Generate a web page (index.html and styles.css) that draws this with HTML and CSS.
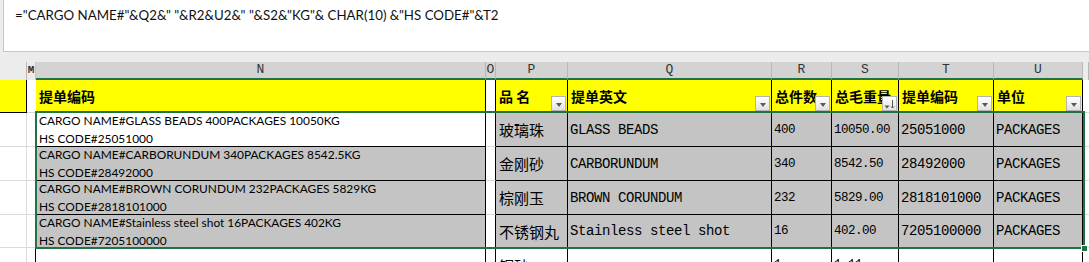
FILE: index.html
```html
<!DOCTYPE html>
<html lang="zh-CN">
<head>
    <meta charset="UTF-8">
    <title>提单编码</title>
    <link rel="stylesheet" href="styles.css">
</head>
<body>
    <div class="formula-bar">=&quot;CARGO NAME#&quot;&amp;Q2&amp;&quot; &quot;&amp;R2&amp;U2&amp;&quot; &quot;&amp;S2&amp;&quot;KG&quot;&amp; CHAR(10) &amp;&quot;HS CODE#&quot;&amp;T2</div>

    <div class="sheet">
        <!-- column letters -->
        <div class="row col-heads">
            <div class="ch off"></div>
            <div class="ch off narrow">M</div>
            <div class="ch">N</div>
            <div class="ch">O</div>
            <div class="ch">P</div>
            <div class="ch">Q</div>
            <div class="ch">R</div>
            <div class="ch">S</div>
            <div class="ch">T</div>
            <div class="ch">U</div>
            <div class="ch off"></div>
        </div>

        <!-- header row with autofilter -->
        <div class="row head-row">
            <div class="cell hd edge"></div>
            <div class="cell blank"></div>
            <div class="cell hd">提单编码</div>
            <div class="cell gap"></div>
            <div class="cell hd">品 名<span class="filter"></span></div>
            <div class="cell hd">提单英文<span class="filter"></span></div>
            <div class="cell hd">总件数<span class="filter"></span></div>
            <div class="cell hd">总毛重量<span class="filter sorted"><svg width="13" height="13" viewBox="0 0 13 13"><path d="M1.5 8.5h5l-2.5 3z" fill="#555"/><path d="M9.5 3v8M8 9.5l1.5 1.5 1.5-1.5" stroke="#555" fill="none"/></svg></span></div>
            <div class="cell hd">提单编码<span class="filter"></span></div>
            <div class="cell hd">单位<span class="filter"></span></div>
            <div class="cell blank tail"></div>
        </div>

        <div class="row data-row">
            <div class="cell plain"></div>
            <div class="cell blank"></div>
            <div class="cell n white"><span>CARGO NAME#GLASS BEADS 400PACKAGES 10050KG</span><span>HS CODE#25051000</span></div>
            <div class="cell gap"></div>
            <div class="cell cn">玻璃珠</div>
            <div class="cell mono">GLASS BEADS</div>
            <div class="cell mono small">400</div>
            <div class="cell mono small">10050.00</div>
            <div class="cell mono">25051000</div>
            <div class="cell mono">PACKAGES</div>
            <div class="cell blank tail"></div>
        </div>

        <div class="row data-row">
            <div class="cell plain"></div>
            <div class="cell blank"></div>
            <div class="cell n"><span>CARGO NAME#CARBORUNDUM 340PACKAGES 8542.5KG</span><span>HS CODE#28492000</span></div>
            <div class="cell gap"></div>
            <div class="cell cn">金刚砂</div>
            <div class="cell mono">CARBORUNDUM</div>
            <div class="cell mono small">340</div>
            <div class="cell mono small">8542.50</div>
            <div class="cell mono">28492000</div>
            <div class="cell mono">PACKAGES</div>
            <div class="cell blank tail"></div>
        </div>

        <div class="row data-row">
            <div class="cell plain"></div>
            <div class="cell blank"></div>
            <div class="cell n"><span>CARGO NAME#BROWN CORUNDUM 232PACKAGES 5829KG</span><span>HS CODE#2818101000</span></div>
            <div class="cell gap"></div>
            <div class="cell cn">棕刚玉</div>
            <div class="cell mono">BROWN CORUNDUM</div>
            <div class="cell mono small">232</div>
            <div class="cell mono small">5829.00</div>
            <div class="cell mono">2818101000</div>
            <div class="cell mono">PACKAGES</div>
            <div class="cell blank tail"></div>
        </div>

        <div class="row data-row last">
            <div class="cell plain"></div>
            <div class="cell blank"></div>
            <div class="cell n"><span>CARGO NAME#Stainless steel shot 16PACKAGES 402KG</span><span>HS CODE#7205100000</span></div>
            <div class="cell gap"></div>
            <div class="cell cn">不锈钢丸</div>
            <div class="cell mono">Stainless steel shot</div>
            <div class="cell mono small">16</div>
            <div class="cell mono small">402.00</div>
            <div class="cell mono">7205100000</div>
            <div class="cell mono">PACKAGES</div>
            <div class="cell blank tail"></div>
        </div>

        <!-- next row, cut off by the window -->
        <div class="row next-row">
            <div class="cell plain"></div>
            <div class="cell blank lined"></div>
            <div class="cell empty"></div>
            <div class="cell empty"></div>
            <div class="cell empty cn">铜砂</div>
            <div class="cell empty"></div>
            <div class="cell empty mono small">1</div>
            <div class="cell empty mono small">1.11</div>
            <div class="cell empty"></div>
            <div class="cell empty"></div>
            <div class="cell blank tail"></div>
        </div>

        <div class="selection"><span class="handle"></span></div>
    </div>
</body>
</html>
```

FILE: styles.css
```css
* {
    box-sizing: border-box;
}
body {
    margin: 0;
    width: 1089px;
    height: 262px;
    overflow: hidden;
    background-color: #ececec;
    font-family: Lato, "Noto Sans CJK SC", sans-serif;
}
.formula-bar {
    height: 52px;
    margin-left: 3px;
    padding: 7px 0 0 11px;
    background-color: #fff;
    border-left: 1px solid #c6c6c6;
    border-bottom: 1px solid #c6c6c6;
    font-size: 13.3px;
    line-height: 16px;
    color: #111;
}
.sheet {
    position: relative;
    margin-top: 10px;
    background-color: #fff;
}
.row {
    display: grid;
    grid-template-columns: 27px 9px 450px 10px 72px 204px 60px 67px 95px 89px 6px;
}
.col-heads {
    height: 18px;
}
.head-row {
    height: 33px;
}
.data-row {
    height: 34px;
}
.data-row.last {
    height: 33px;
}
.next-row {
    height: 34px;
}

/* column letters */
.ch {
    background-color: #d3d3d3;
    border-right: 1px solid #b8b8b8;
    border-bottom: 2px solid #217346;
    font-family: "Liberation Mono", monospace;
    font-size: 13px;
    line-height: 16px;
    text-align: center;
    color: #333;
}
.ch.off {
    background-color: #ececec;
    border-bottom: none;
}
.ch.narrow {
    font-size: 11px;
    font-weight: bold;
    overflow: hidden;
    border-right-color: #c8c8c8;
}

/* cells */
.cell {
    display: flex;
    align-items: center;
    padding-left: 2px;
    white-space: nowrap;
    overflow: hidden;
    background-color: #c4c4c4;
    border-right: 1px solid #000;
    border-bottom: 1px solid #000;
    color: #000;
}
.hd {
    position: relative;
    padding-left: 3px;
    background-color: #ffff00;
    border-bottom-width: 2px;
    font-family: "Noto Sans CJK SC", sans-serif;
    font-weight: bold;
    font-size: 14px;
}
.hd.edge {
    border-bottom: 1px solid #000;
}
.blank {
    background-color: #fff;
    border-right: none;
    border-bottom-color: #dadada;
}
.blank.lined {
    border-right: 1px solid #000;
}
.gap {
    background-color: #fff;
    border-bottom-color: #dadada;
}
.plain {
    background-color: #fff;
    border-right-color: #dadada;
    border-bottom-color: #dadada;
}
.empty {
    background-color: #fff;
    border-bottom: none;
}
.n {
    flex-direction: column;
    align-items: flex-start;
    justify-content: flex-start;
    gap: 4px;
    padding: 1px 0 0 3px;
    font-family: Lato, sans-serif;
    font-size: 11.9px;
    line-height: 14px;
}
.n.white {
    background-color: #fff;
}
.cn {
    padding-left: 3px;
    font-family: "Noto Sans CJK SC", sans-serif;
    font-size: 15px;
}
.mono {
    font-family: "Liberation Mono", monospace;
    font-size: 14px;
    letter-spacing: -0.4px;
}
.mono.small {
    font-size: 12.5px;
    letter-spacing: -0.5px;
}

/* autofilter buttons */
.filter {
    position: absolute;
    right: 1px;
    bottom: 0;
    width: 15px;
    height: 15px;
    border: 1px solid #b4b4b4;
    background: linear-gradient(#ffffff, #e2e2e2);
    display: flex;
    align-items: center;
    justify-content: center;
}
.filter::after {
    content: '';
    margin-top: 3px;
    border-left: 3.5px solid transparent;
    border-right: 3.5px solid transparent;
    border-top: 4px solid #5a5a5a;
}
.filter.sorted::after {
    display: none;
}

/* selected range N3:U6 */
.selection {
    position: absolute;
    left: 35px;
    top: 49px;
    width: 1050px;
    height: 138px;
    border: 2px solid #217346;
    pointer-events: none;
}
.handle {
    position: absolute;
    right: -5px;
    bottom: -5px;
    width: 7px;
    height: 7px;
    background-color: #217346;
    border: 1px solid #fff;
}
```
